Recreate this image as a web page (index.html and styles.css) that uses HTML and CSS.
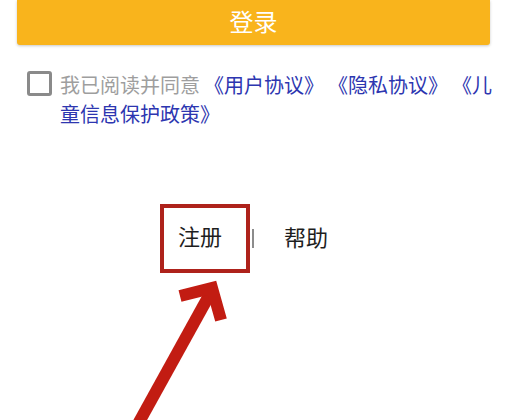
FILE: index.html
```html
<!DOCTYPE html>
<html lang="zh-CN">
<head>
<meta charset="utf-8">
<title>登录</title>
<link rel="stylesheet" href="styles.css">
</head>
<body>
<div class="page">
  <div class="login-btn">登录</div>
  <div class="agree">
    <span class="checkbox"></span>
    <p class="agree-text"><span class="muted">我已阅读并同意</span><a class="link gap">《用户协议》</a><a class="link gap">《隐私协议》</a><a class="link gap">《儿童信息保护政策》</a></p>
  </div>
  <div class="nav">
    <span class="nav-item boxed">注册</span>
    <span class="divider"></span>
    <span class="nav-item help">帮助</span>
  </div>
  <svg class="arrow" width="517" height="420" viewBox="0 0 517 420" aria-hidden="true">
    <line x1="138" y1="424" x2="211" y2="292" stroke="#C21C12" stroke-width="12"/>
    <polyline points="180,296 212,288 221,320" fill="none" stroke="#C21C12" stroke-width="12" stroke-linejoin="miter" stroke-miterlimit="10"/>
  </svg>
</div>
</body>
</html>
```
FILE: styles.css
```css
html, body {
  margin: 0;
  padding: 0;
  background: #ffffff;
}
body {
  font-family: "Noto Sans CJK SC", "Noto Sans", sans-serif;
  width: 517px;
  height: 420px;
  overflow: hidden;
}
.page {
  position: relative;
  width: 517px;
  height: 420px;
}
.login-btn {
  margin-left: 17px;
  width: 473px;
  height: 45px;
  background: #F9B41C;
  color: #ffffff;
  font-size: 24px;
  line-height: 42px;
  text-align: center;
  border-radius: 0 0 3px 3px;
  box-shadow: 0 1px 3px rgba(0, 0, 0, 0.22);
}
.agree {
  display: flex;
  align-items: flex-start;
  margin-top: 26px;
  padding-left: 27px;
}
.checkbox {
  flex: none;
  width: 19px;
  height: 19px;
  border: 3px solid #8a8a8a;
  border-radius: 3px;
  background: #fff;
}
.agree-text {
  margin: 0 0 0 8px;
  width: 440px;
  font-size: 20px;
  line-height: 29px;
  margin-top: -1px;
  text-spacing-trim: space-all;
}
.muted {
  color: #9e9e9e;
}
.link {
  color: #2D36B0;
  text-decoration: none;
}
.link.gap {
  margin-left: 4px;
}
.nav {
  display: flex;
  align-items: center;
  margin-top: 76px;
  padding-left: 160px;
}
.nav-item {
  font-size: 22px;
  line-height: 30px;
  color: #1e1e1e;
}
.boxed {
  border: 4px solid #AE221B;
  padding: 12px 24px 19px 14px;
}
.divider {
  width: 2px;
  height: 19px;
  background: #8c8c8c;
  margin-left: 2px;
}
.help {
  margin-left: 30px;
  margin-bottom: 6px;
}
.arrow {
  position: absolute;
  left: 0;
  top: 0;
}
```
